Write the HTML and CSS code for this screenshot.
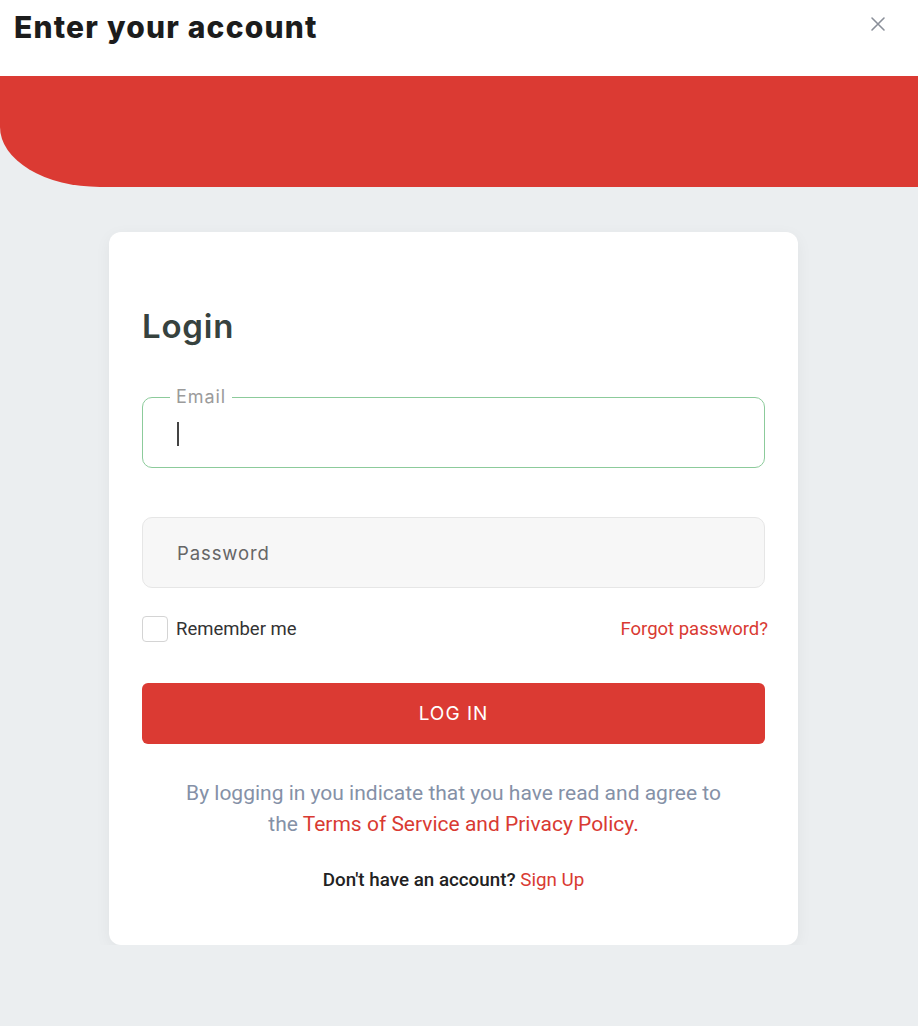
FILE: index.html
```html
<!DOCTYPE html>
<html lang="en">

<head>
    <meta charset="UTF-8" />
    <meta name="viewport" content="width=device-width, initial-scale=1.0" />
    <title>Enter your account</title>
    <link rel="stylesheet" href="styles.css">
</head>

<body>
    <header class="top">
        <h1>Enter your account</h1>
        <button class="close" aria-label="Close">
            <svg width="16" height="16" viewBox="0 0 16 16">
                <path d="M2 2 L14 14 M14 2 L2 14" stroke="#8a8f99" stroke-width="1.6" stroke-linecap="round" />
            </svg>
        </button>
    </header>
    <div class="band"></div>

    <main class="page">
        <form class="card" onsubmit="return false">
            <h2>Login</h2>

            <div class="field focused">
                <label>Email</label>
                <div class="field-input"><span class="caret"></span></div>
            </div>

            <div class="field filled">
                <div class="field-input placeholder">Password</div>
            </div>

            <div class="options">
                <label class="remember"><span class="box"></span> Remember me</label>
                <a href="#" class="link">Forgot password?</a>
            </div>

            <button type="submit" class="login-btn">LOG IN</button>

            <p class="terms">By logging in you indicate that you have read and agree to<br>
                the <a href="#" class="link">Terms of Service and Privacy Policy.</a></p>

            <p class="signup">Don't have an account? <a href="#" class="link">Sign Up</a></p>
        </form>
    </main>
</body>

</html>
```

FILE: styles.css
```css
body {
    margin: 0;
    background: #ebeef0;
    font-family: Roboto, 'Liberation Sans', sans-serif;
    color: #333;
}

.top {
    height: 76px;
    background: #fff;
    display: flex;
    justify-content: space-between;
    align-items: flex-start;
    padding: 0 32px 0 14px;
    box-sizing: border-box;
}

.top h1 {
    margin: 0;
    font-family: Inter, 'Noto Sans', sans-serif;
    font-weight: 800;
    font-size: 30px;
    line-height: 54px;
    letter-spacing: 1.2px;
    color: #1c1c1c;
}

.close {
    margin-top: 16px;
    padding: 0;
    border: none;
    background: none;
    cursor: pointer;
}

.band {
    height: 111px;
    background: #db3a33;
    border-bottom-left-radius: 100px 60px;
}

.page {
    padding: 45px 0 0 109px;
}

.card {
    width: 689px;
    box-sizing: border-box;
    background: #fff;
    border-radius: 12px;
    box-shadow: 0 4px 16px rgba(0, 0, 0, 0.05);
    padding: 74px 33px 53px;
}

.card h2 {
    margin: 0 0 51px;
    font-family: Inter, 'Noto Sans', sans-serif;
    font-weight: 600;
    font-size: 33px;
    line-height: 40px;
    letter-spacing: 0.8px;
    color: #37423e;
}

.field {
    position: relative;
    margin-bottom: 49px;
}

.field-input {
    height: 71px;
    box-sizing: border-box;
    border-radius: 10px;
    padding: 0 34px;
    display: flex;
    align-items: center;
    font-family: Inter, 'Noto Sans', sans-serif;
    font-size: 18.5px;
    letter-spacing: 0.9px;
}

.focused .field-input {
    border: 1.7px solid #8ccb9b;
    background: #fff;
}

.focused label {
    position: absolute;
    top: -11px;
    left: 28px;
    padding: 0 6px;
    background: #fff;
    font-family: Inter, 'Noto Sans', sans-serif;
    font-size: 18px;
    line-height: 22px;
    letter-spacing: 0.9px;
    color: #9b9b9b;
}

.caret {
    width: 2px;
    height: 24px;
    background: #444;
    margin-top: 3px;
}

.filled .field-input {
    border: 1.5px solid #e6e6e6;
    background: #f7f7f7;
}

.placeholder {
    color: #666;
}

.options {
    display: flex;
    justify-content: space-between;
    align-items: center;
    margin-top: -21px;
    font-size: 18.5px;
}

.remember {
    display: flex;
    align-items: center;
    gap: 8px;
    color: #333;
}

.box {
    width: 24px;
    height: 24px;
    border: 1.5px solid #d4d4d4;
    border-radius: 4px;
}

.link {
    color: #d93a32;
    text-decoration: none;
}

.options .link {
    margin-right: -3px;
}

.login-btn {
    display: block;
    width: 100%;
    height: 61px;
    margin-top: 41px;
    border: none;
    border-radius: 6px;
    background: #db3a33;
    color: #fff;
    font-family: Inter, 'Noto Sans', sans-serif;
    font-size: 19px;
    letter-spacing: 1px;
    cursor: pointer;
}

.terms {
    margin: 34px 0 0;
    text-align: center;
    font-size: 21px;
    line-height: 31px;
    color: #8591a7;
}

.signup {
    margin: 28px 0 0;
    text-align: center;
    font-size: 18.8px;
    line-height: 24px;
    font-weight: 500;
    color: #222;
}

.signup .link {
    font-weight: 400;
}
```
